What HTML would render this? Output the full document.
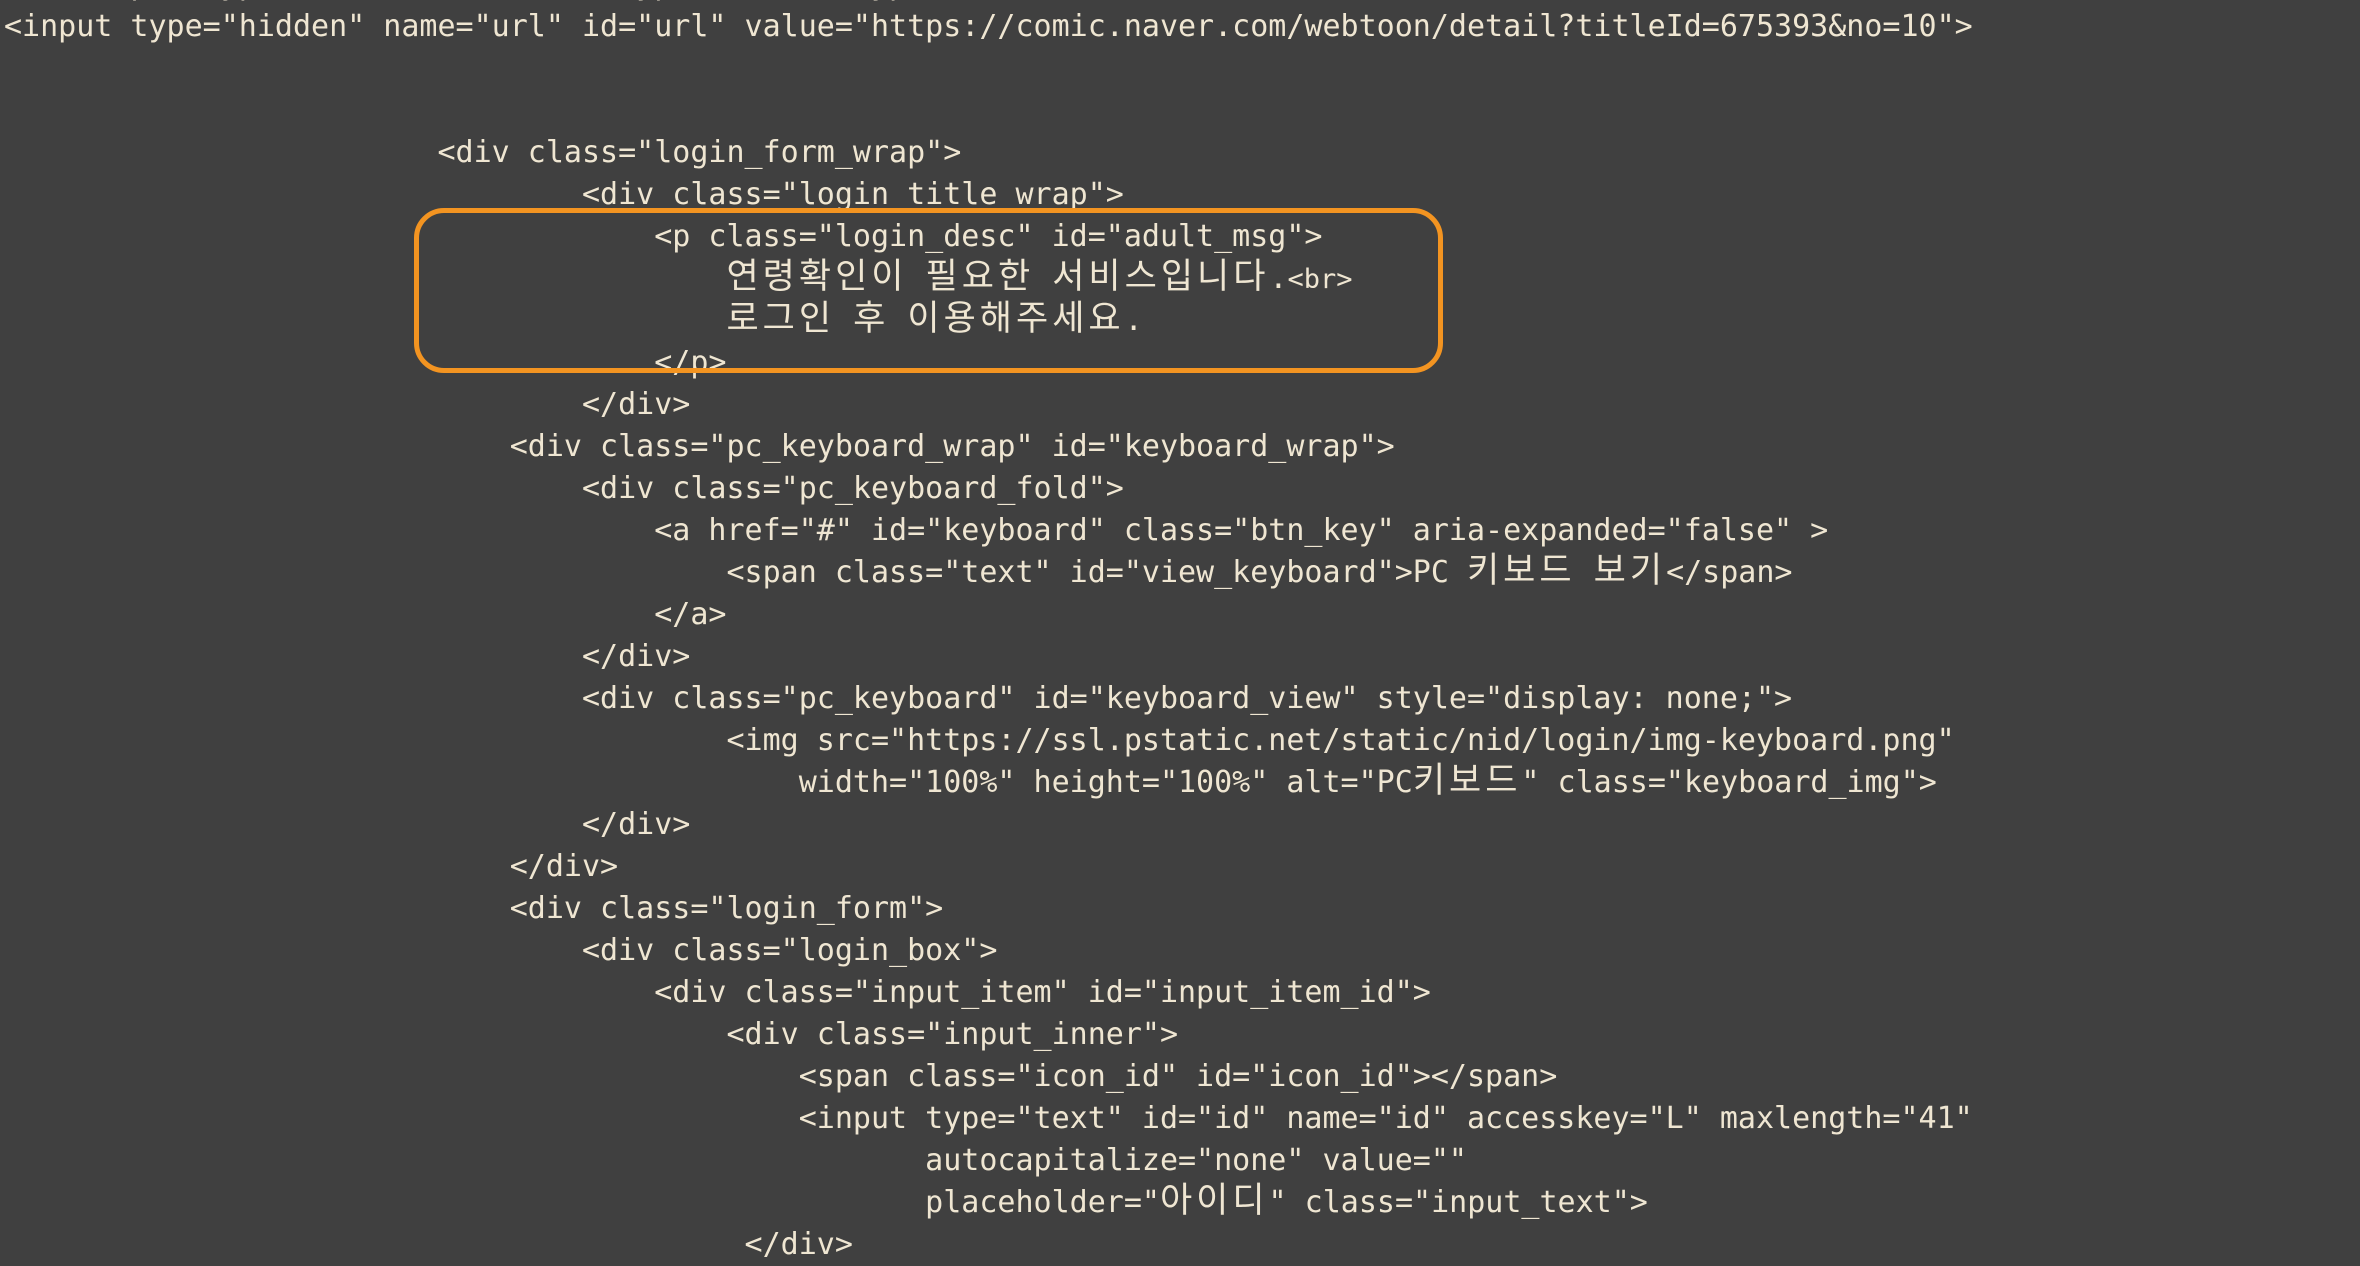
<!DOCTYPE html>
<html><head><meta charset="utf-8"><style>
html,body{margin:0;padding:0;background:#404040;width:2360px;height:1236px;overflow:hidden}
pre{position:absolute;left:4px;top:-36px;margin:0;font-family:"DejaVu Sans Mono","Liberation Mono",monospace;font-size:30px;line-height:42px;color:#efe6d2;white-space:pre}
.k{font-family:"Noto Sans CJK KR","NanumGothic",sans-serif;font-size:35px;letter-spacing:4px;line-height:0}
.s{font-size:27px;line-height:0}
.box{position:absolute;left:414px;top:208px;width:1019px;height:155px;border:5px solid #f39421;border-radius:30px}
</style></head><body>
<pre>    &lt;input type="hidden" name="svctype" id="svctype" value="1"&gt;
&lt;input type="hidden" name="url" id="url" value="https://comic.naver.com/webtoon/detail?titleId=675393&amp;no=10"&gt;


                        &lt;div class="login_form_wrap"&gt;
                                &lt;div class="login_title_wrap"&gt;
                                    &lt;p class="login_desc" id="adult_msg"&gt;
                                        <span class="k">연령확인이</span> <span class="k">필요한</span> <span class="k">서비스입니다</span>.<span class="s">&lt;br&gt;</span>
                                        <span class="k">로그인</span> <span class="k">후</span> <span class="k">이용해주세요</span>.
                                    &lt;/p&gt;
                                &lt;/div&gt;
                            &lt;div class="pc_keyboard_wrap" id="keyboard_wrap"&gt;
                                &lt;div class="pc_keyboard_fold"&gt;
                                    &lt;a href="#" id="keyboard" class="btn_key" aria-expanded="false" &gt;
                                        &lt;span class="text" id="view_keyboard"&gt;PC <span class="k">키보드</span> <span class="k">보기</span>&lt;/span&gt;
                                    &lt;/a&gt;
                                &lt;/div&gt;
                                &lt;div class="pc_keyboard" id="keyboard_view" style="display: none;"&gt;
                                        &lt;img src="https://ssl.pstatic.net/static/nid/login/img-keyboard.png"
                                            width="100%" height="100%" alt="PC<span class="k">키보드</span>" class="keyboard_img"&gt;
                                &lt;/div&gt;
                            &lt;/div&gt;
                            &lt;div class="login_form"&gt;
                                &lt;div class="login_box"&gt;
                                    &lt;div class="input_item" id="input_item_id"&gt;
                                        &lt;div class="input_inner"&gt;
                                            &lt;span class="icon_id" id="icon_id"&gt;&lt;/span&gt;
                                            &lt;input type="text" id="id" name="id" accesskey="L" maxlength="41"
                                                   autocapitalize="none" value=""
                                                   placeholder="<span class="k">아이디</span>" class="input_text"&gt;
                                         &lt;/div&gt;
</pre>
<div class="box"></div>
</body></html>
